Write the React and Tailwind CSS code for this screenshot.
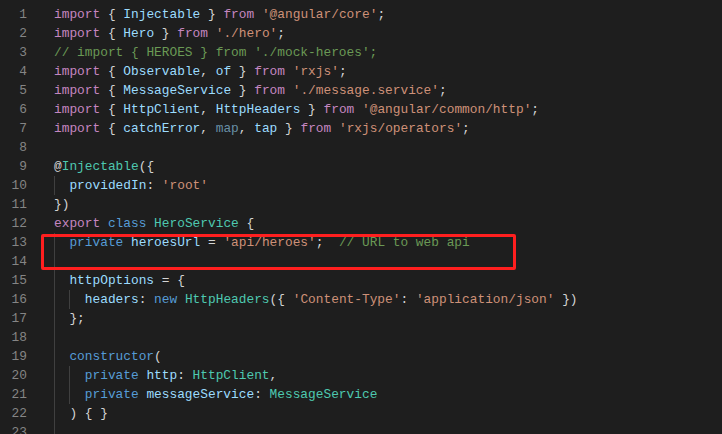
// Editor view: a TypeScript service file in a dark theme, with one region boxed in red.

import React from 'react';

// Token colours (dark theme)
const K = 'text-[#C586C0]'; // import / from / export
const B = 'text-[#569CD6]'; // class, private, new, constructor
const V = 'text-[#9CDCFE]'; // variables, properties
const T = 'text-[#4EC9B0]'; // types / classes
const S = 'text-[#CE9178]'; // strings
const C = 'text-[#6A9955]'; // comments
const P = 'text-[#D4D4D4]'; // punctuation
const F = 'text-[#9CDCFE]/60'; // unused import (faded)

// Each line: indent level (2 spaces each, every level shows a guide) and tokens
const lines = [
  { n: 1, indent: 0, tokens: [['import', K], [' { ', P], ['Injectable', V], [' } ', P], ['from', K], [' ', P], ["'@angular/core'", S], [';', P]] },
  { n: 2, indent: 0, tokens: [['import', K], [' { ', P], ['Hero', V], [' } ', P], ['from', K], [' ', P], ["'./hero'", S], [';', P]] },
  { n: 3, indent: 0, tokens: [["// import { HEROES } from './mock-heroes';", C]] },
  { n: 4, indent: 0, tokens: [['import', K], [' { ', P], ['Observable', V], [', ', P], ['of', V], [' } ', P], ['from', K], [' ', P], ["'rxjs'", S], [';', P]] },
  { n: 5, indent: 0, tokens: [['import', K], [' { ', P], ['MessageService', V], [' } ', P], ['from', K], [' ', P], ["'./message.service'", S], [';', P]] },
  { n: 6, indent: 0, tokens: [['import', K], [' { ', P], ['HttpClient', V], [', ', P], ['HttpHeaders', V], [' } ', P], ['from', K], [' ', P], ["'@angular/common/http'", S], [';', P]] },
  { n: 7, indent: 0, tokens: [['import', K], [' { ', P], ['catchError', V], [', ', P], ['map', F], [', ', P], ['tap', V], [' } ', P], ['from', K], [' ', P], ["'rxjs/operators'", S], [';', P]] },
  { n: 8, indent: 0, tokens: [] },
  { n: 9, indent: 0, tokens: [['@', P], ['Injectable', T], ['({', P]] },
  { n: 10, indent: 1, tokens: [['providedIn', V], [': ', P], ["'root'", S]] },
  { n: 11, indent: 0, tokens: [['})', P]] },
  { n: 12, indent: 0, tokens: [['export', K], [' ', P], ['class', B], [' ', P], ['HeroService', T], [' {', P]] },
  { n: 13, indent: 1, tokens: [['private', B], [' ', P], ['heroesUrl', V], [' = ', P], ["'api/heroes'", S], [';  ', P], ['// URL to web api', C]] },
  { n: 14, indent: 1, tokens: [] },
  { n: 15, indent: 1, tokens: [['httpOptions', V], [' = {', P]] },
  { n: 16, indent: 2, tokens: [['headers', V], [': ', P], ['new', B], [' ', P], ['HttpHeaders', T], ['({ ', P], ["'Content-Type'", S], [': ', P], ["'application/json'", S], [' })', P]] },
  { n: 17, indent: 1, tokens: [['};', P]] },
  { n: 18, indent: 1, tokens: [] },
  { n: 19, indent: 1, tokens: [['constructor', B], ['(', P]] },
  { n: 20, indent: 2, tokens: [['private', B], [' ', P], ['http', V], [': ', P], ['HttpClient', T], [',', P]] },
  { n: 21, indent: 2, tokens: [['private', B], [' ', P], ['messageService', V], [': ', P], ['MessageService', T]] },
  { n: 22, indent: 1, tokens: [[') { }', P]] },
  { n: 23, indent: 1, tokens: [] },
];

const CodeLine = ({ line }) => (
  <div className="flex h-[19px] leading-[19px]">
    {/* Número da linha */}
    <div className="w-[27px] shrink-0 text-right text-[#858585]">{line.n}</div>
    {/* Código */}
    <div className="flex pl-[27px] whitespace-pre">
      {Array.from({ length: line.indent }).map((_, i) => (
        <span key={i} className="w-[2ch] shrink-0 border-l border-[#404040]" />
      ))}
      {line.tokens.map(([text, cls], i) => (
        <span key={i} className={cls}>{text}</span>
      ))}
    </div>
  </div>
);

const App = () => {
  return (
    <div className="relative w-[722px] h-[434px] overflow-hidden bg-[#1e1e1e] font-['Liberation_Mono','DejaVu_Sans_Mono',monospace] text-[12.83px]">
      <div className="flex flex-col pt-[4.5px]">
        {lines.map(line => (
          <CodeLine key={line.n} line={line} />
        ))}
      </div>

      {/* Caixa vermelha de destaque sobre as linhas 13-14 */}
      <div className="absolute left-[41px] top-[234px] w-[475px] h-[36px] border-[3px] border-[#ff1f1f] rounded-[2px] pointer-events-none" />
    </div>
  );
};

export default App;
